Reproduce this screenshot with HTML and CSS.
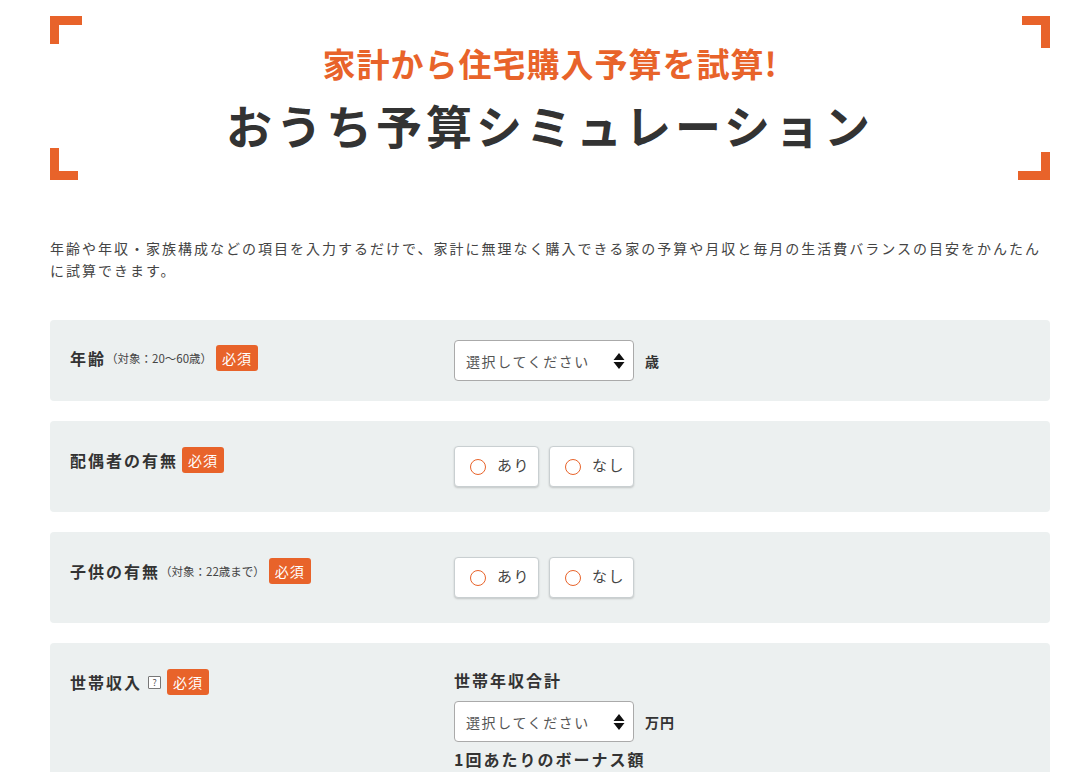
FILE: index.html
```html
<!DOCTYPE html>
<html lang="ja">
<head>
<meta charset="utf-8">
<title>おうち予算シミュレーション</title>
<link rel="stylesheet" href="styles.css">
</head>
<body>
<div class="page">
  <header class="hero">
    <span class="corner tl"></span><span class="corner tr"></span>
    <span class="corner bl"></span><span class="corner br"></span>
    <p class="hero-sub">家計から住宅購入予算を試算!</p>
    <h1 class="hero-title">おうち予算シミュレーション</h1>
  </header>

  <p class="lead">年齢や年収・家族構成などの項目を入力するだけで、家計に無理なく購入できる家の予算や月収と毎月の生活費バランスの目安をかんたんに試算できます。</p>

  <section class="row row-narrow">
    <div class="label"><span class="label-main">年齢</span><span class="note">（対象：20〜60歳）</span><span class="req">必須</span></div>
    <div class="field">
      <div class="inline">
        <div class="select"><span>選択してください</span><svg class="arrows" width="12" height="18" viewBox="0 0 12 18"><path d="M6 1 L11.5 8 L0.5 8 Z M0.5 10 L11.5 10 L6 17 Z" fill="#111"/></svg></div>
        <span class="unit">歳</span>
      </div>
    </div>
  </section>

  <section class="row">
    <div class="label"><span class="label-main">配偶者の有無</span><span class="req">必須</span></div>
    <div class="field">
      <div class="radios">
        <label class="radio"><span class="dot"></span><span>あり</span></label>
        <label class="radio"><span class="dot"></span><span>なし</span></label>
      </div>
    </div>
  </section>

  <section class="row">
    <div class="label"><span class="label-main">子供の有無</span><span class="note">（対象：22歳まで）</span><span class="req">必須</span></div>
    <div class="field">
      <div class="radios">
        <label class="radio"><span class="dot"></span><span>あり</span></label>
        <label class="radio"><span class="dot"></span><span>なし</span></label>
      </div>
    </div>
  </section>

  <section class="row">
    <div class="label"><span class="label-main">世帯収入</span><span class="help">?</span><span class="req">必須</span></div>
    <div class="field">
      <p class="field-title">世帯年収合計</p>
      <div class="inline">
        <div class="select"><span>選択してください</span><svg class="arrows" width="12" height="18" viewBox="0 0 12 18"><path d="M6 1 L11.5 8 L0.5 8 Z M0.5 10 L11.5 10 L6 17 Z" fill="#111"/></svg></div>
        <span class="unit">万円</span>
      </div>
      <p class="field-title second">1回あたりのボーナス額</p>
      <div class="inline">
        <div class="select"><span>選択してください</span><svg class="arrows" width="12" height="18" viewBox="0 0 12 18"><path d="M6 1 L11.5 8 L0.5 8 Z M0.5 10 L11.5 10 L6 17 Z" fill="#111"/></svg></div>
        <span class="unit">万円</span>
      </div>
    </div>
  </section>
</div>
</body>
</html>
```

FILE: styles.css
```css
* { box-sizing: border-box; }
html, body { margin: 0; padding: 0; background: #fff; }
body {
  font-family: "Noto Sans CJK JP", "Noto Sans", sans-serif;
  color: #333;
}
p { margin: 0; }
h1 { margin: 0; }

.page {
  width: 1000px;
  margin-left: 50px;
  padding-top: 16px;
}

.hero {
  position: relative;
  height: 164px;
  padding-top: 25px;
  text-align: center;
}
.corner {
  position: absolute;
  border-color: #e8632a;
  border-style: solid;
  border-width: 0;
}
.corner.tl { left: 0; top: 0; border-top-width: 9px; border-left-width: 9px; height: 28px; width: 32px; }
.corner.tr { right: 0; top: 0; border-top-width: 9px; border-right-width: 9px; height: 32px; width: 28px; }
.corner.bl { left: 0; bottom: 0; border-bottom-width: 9px; border-left-width: 9px; height: 32px; width: 28px; }
.corner.br { right: 0; bottom: 0; border-bottom-width: 9px; border-right-width: 9px; height: 28px; width: 32px; }

.hero-sub {
  color: #e8632a;
  font-size: 33px;
  font-weight: 700;
  line-height: 45px;
  letter-spacing: 1px;
}
.hero-title {
  margin-top: 8px;
  font-size: 46px;
  font-weight: 700;
  line-height: 60px;
  letter-spacing: 4px;
  color: #333;
}

.lead {
  margin-top: 57px;
  font-size: 14px;
  line-height: 22px;
  letter-spacing: 2px;
  color: #444;
}

.row {
  margin-top: 39px;
  display: flex;
  background: #ecf0f0;
  border-radius: 4px;
  padding: 20px;
  min-height: 91px;
}
.row + .row { margin-top: 20px; }
.row-narrow { min-height: 81px; }

.label {
  width: 384px;
  flex: none;
  display: flex;
  align-items: center;
  align-self: flex-start;
  height: 36px;
}
.row:not(.row-narrow) .label { margin-top: 1px; }
.label-main {
  font-size: 16px;
  font-weight: 700;
  letter-spacing: 2px;
  color: #333;
}
.note {
  font-size: 11.5px;
  color: #444;
  letter-spacing: 0;
}
.req {
  display: inline-block;
  background: #e8632a;
  color: #fff;
  font-size: 14px;
  line-height: 18px;
  padding: 4px 6px;
  border-radius: 3px;
  margin-left: 4px;
  letter-spacing: 1px;
}
.help {
  display: inline-flex;
  align-items: center;
  justify-content: center;
  width: 13px;
  height: 13px;
  border: 1px solid #777;
  border-radius: 1px;
  font-size: 9px;
  line-height: 1;
  color: #555;
  margin: 0 2px 0 6px;
  background: #fff;
}

.field { flex: 1; }
.inline { display: flex; align-items: center; }
.select {
  width: 180px;
  height: 41px;
  background: #fff;
  border: 1px solid #aaa;
  border-radius: 4px;
  display: flex;
  align-items: center;
  justify-content: space-between;
  padding: 0 8px 0 11px;
  font-size: 14px;
  letter-spacing: 1.6px;
  color: #555;
}
.arrows { display: block; }
.unit {
  margin-left: 11px;
  font-size: 14px;
  font-weight: 700;
  color: #333;
  letter-spacing: 1px;
}

.radios { display: flex; gap: 10px; padding: 5px 0; }
.radio {
  width: 85px;
  height: 41px;
  background: #fff;
  border: 1px solid #c9cfd1;
  border-radius: 4px;
  box-shadow: 0 1px 2px rgba(0,0,0,.18);
  display: flex;
  align-items: center;
  padding-left: 15px;
  font-size: 15px;
  letter-spacing: 1.5px;
  color: #444;
}
.radio > span:last-child { margin-top: -4px; }
.dot {
  width: 16px;
  height: 16px;
  border: 1.5px solid #e8632a;
  border-radius: 50%;
  margin-right: 11px;
  flex: none;
}

.field-title {
  font-size: 16px;
  font-weight: 700;
  line-height: 22px;
  letter-spacing: 2px;
  color: #333;
  margin-top: 6px;
  margin-bottom: 10px;
}
.field-title.second { margin-top: 6px; margin-bottom: 8px; }
```
